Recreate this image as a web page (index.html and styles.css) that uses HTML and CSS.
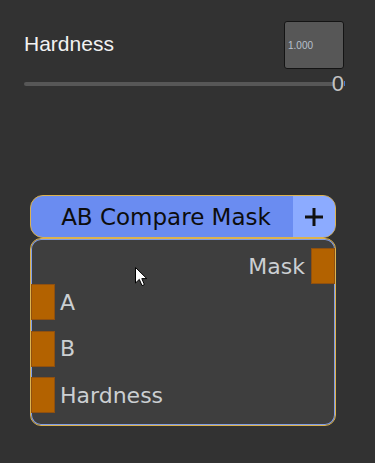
FILE: index.html
```html
<!DOCTYPE html>
<html lang="en">
<head>
    <meta charset="UTF-8">
    <meta name="viewport" content="width=device-width, initial-scale=1.0">
    <title>AB Compare Mask</title>
    <link rel="stylesheet" href="styles.css">
</head>
<body>
    <div class="panel">
        <div class="field-row">
            <span class="field-label">Hardness</span>
            <div class="num-box">1.000</div>
        </div>
        <div class="slider">
            <div class="slider-track"></div>
            <span class="slider-thumb">0</span>
        </div>
    </div>

    <div class="node">
        <div class="node-header">
            <div class="node-title">AB Compare Mask</div>
            <button class="node-add">
                <svg width="20" height="20" viewBox="0 0 20 20">
                    <path d="M10 1 V19 M1 10 H19" stroke="#111" stroke-width="3" fill="none"/>
                </svg>
            </button>
        </div>
        <div class="node-body">
            <div class="port-row out">
                <span class="port-label">Mask</span>
                <span class="port"></span>
            </div>
            <div class="port-row in">
                <span class="port"></span>
                <span class="port-label">A</span>
            </div>
            <div class="port-row in">
                <span class="port"></span>
                <span class="port-label">B</span>
            </div>
            <div class="port-row in">
                <span class="port"></span>
                <span class="port-label">Hardness</span>
            </div>

            <!-- mouse pointer -->
            <svg class="cursor" width="13" height="20" viewBox="0 0 13 20">
                <path d="M0.5 0.5 L0.5 16 L4.3 12.4 L7 18.6 L9.4 17.6 L6.8 11.6 L11.8 11.6 Z" fill="#fff" stroke="#000" stroke-width="1"/>
            </svg>
        </div>
    </div>
</body>
</html>
```

FILE: styles.css
```css
* {
    margin: 0;
    padding: 0;
    box-sizing: border-box;
}

:root {
    --bg: #323232;
    --field: #575757;
    --track: #575757;
    --text: #f2f2f2;
    --node-body: #3e3e3e;
    --node-blue: #6a8cf1;
    --node-blue-light: #8cabff;
    --node-gold: #dcb24e;
    --port: #b36200;
    --port-label: #cbcfd2;
}

body {
    background: var(--bg);
    height: 463px;
    overflow: hidden;
    font-family: 'Liberation Sans', Arial, sans-serif;
}

.panel {
    padding: 21px 31px 0 24px;
}

.field-row {
    display: flex;
    justify-content: space-between;
    align-items: flex-start;
}

.field-label {
    margin-top: 11px;
    font-size: 21px;
    line-height: 24px;
    color: var(--text);
}

.num-box {
    width: 60px;
    height: 48px;
    background: var(--field);
    border: 1px solid #141414;
    border-radius: 3px;
    padding-left: 3px;
    display: flex;
    align-items: center;
    font-size: 10px;
    color: #b8c0cc;
}

.slider {
    position: relative;
    height: 20px;
    margin-top: 5px;
    display: flex;
    align-items: center;
}

.slider-track {
    flex: 1;
    height: 4px;
    margin-right: 9px;
    background: var(--track);
    border-radius: 2px;
}

.slider-thumb {
    position: absolute;
    right: -1px;
    top: -2px;
    font-size: 22px;
    line-height: 24px;
    color: #c4c4c4;
    border-right: 1px solid transparent;
}

.slider-thumb::after {
    content: "";
    position: absolute;
    right: -1px;
    top: 9px;
    width: 1px;
    height: 5px;
    background: #3a7bd5;
}

.node {
    width: 306px;
    margin: 101px 0 0 30px;
    font-family: 'DejaVu Sans', Verdana, sans-serif;
}

.node-header {
    display: flex;
    height: 43px;
    background: var(--node-blue);
    border: 1px solid var(--node-gold);
    border-radius: 13px;
    overflow: hidden;
}

.node-title {
    flex: 1;
    display: flex;
    align-items: center;
    justify-content: center;
    padding-left: 8px;
    font-size: 23px;
    color: #0d0d0d;
}

.node-add {
    width: 42px;
    border: none;
    background: var(--node-blue-light);
    display: flex;
    align-items: center;
    justify-content: center;
}

.node-body {
    position: relative;
    height: 188px;
    background: var(--node-body);
    border: 1px solid var(--node-gold);
    border-radius: 11px;
    box-shadow: inset 0 0 0 1px #7f9ce6;
    padding-top: 9px;
    display: flex;
    flex-direction: column;
}

.port-row {
    display: flex;
    align-items: center;
    height: 36px;
}

.port-row.out {
    justify-content: flex-end;
}

.port-row.in + .port-row.in {
    margin-top: 10.5px;
}

.port {
    width: 24px;
    height: 36px;
    background: var(--port);
    border: 1px solid #8f5010;
}

.port-label {
    font-size: 22px;
    color: var(--port-label);
}

.out .port-label {
    margin-right: 6px;
}

.in .port-label {
    margin-left: 5px;
}

.cursor {
    position: absolute;
    left: 104px;
    top: 28px;
}
```
